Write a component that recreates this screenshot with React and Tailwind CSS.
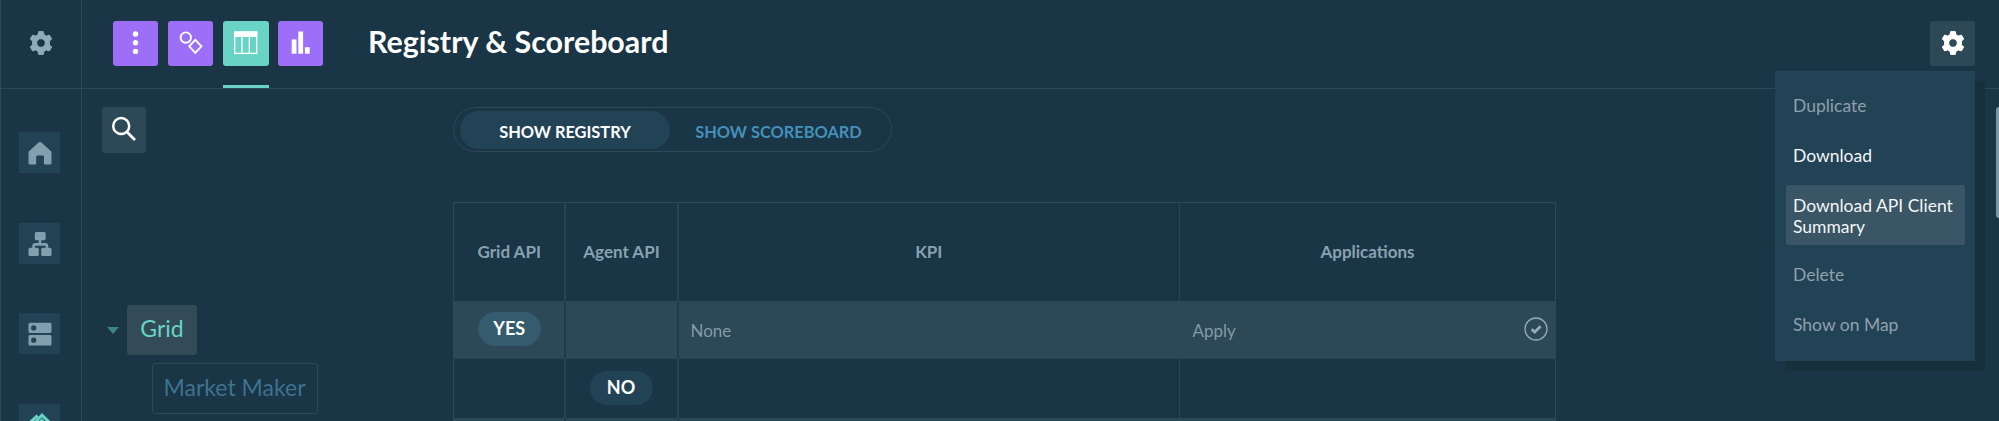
function Gear({ className }) {
  return (
    <svg viewBox="0 0 24 24" className={className} fill="currentColor">
      <path
        fillRule="evenodd"
        stroke="currentColor"
        strokeWidth="1"
        strokeLinejoin="round"
        d="M9.700 .6h4.600l.6 3.100a8.800 8.800 0 0 1 2.500 1.400l3-1 2.300 4-2.400 2.100a8.800 8.800 0 0 1 0 3.600l2.400 2.100-2.300 4-3-1a8.800 8.800 0 0 1-2.500 1.400l-.6 3.100H9.700l-.6-3.100a8.800 8.800 0 0 1-2.500-1.400l-3 1-2.300-4 2.400-2.100a8.800 8.800 0 0 1 0-3.600L1.300 8.100l2.300-4 3 1a8.800 8.800 0 0 1 2.500-1.400zM12 7.700a4.300 4.300 0 1 0 0 8.600a4.300 4.300 0 0 0 0-8.600z"
      />
    </svg>
  );
}

function HomeIcon() {
  return (
    <svg viewBox="0 0 24 24" className="h-6 w-6" fill="currentColor">
      <path d="M11.200 1q.8-.7 1.600 0L23 10.200q.5.5.5 1.200V22.400q0 1.100-1.100 1.100H17q-1.100 0-1.100-1.100V15.600q0-1-1-1H9.200q-1 0-1 1V22.400q0 1.100-1.100 1.100H1.600q-1.100 0-1.100-1.100V11.400q0-.7.5-1.200z" />
    </svg>
  );
}

function TreeIcon() {
  return (
    <svg viewBox="0 0 24 24" className="h-6 w-6" fill="currentColor">
      <rect x="6.800" y="0" width="10.800" height="8.200" rx="1.500" />
      <rect x=".5" y="15.800" width="10.300" height="8.200" rx="1.500" />
      <rect x="13.200" y="15.800" width="10.300" height="8.200" rx="1.500" />
      <path d="M12 7v5.400M5.500 17v-2.600q0-2 2-2h9.500q2 0 2 2V17" fill="none" stroke="currentColor" strokeWidth="2.600" />
    </svg>
  );
}

function ServerIcon() {
  return (
    <svg viewBox="0 0 24 24" className="h-6 w-6" fill="currentColor">
      <path fillRule="evenodd" d="M2 .7H22q1.500 0 1.500 1.500V9.600q0 1.500-1.500 1.500H2q-1.500 0-1.500-1.500V2.200Q.5.700 2 .7zM5.700 3.300a2.600 2.600 0 1 0 0 5.200a2.600 2.600 0 0 0 0-5.200z" />
      <path fillRule="evenodd" d="M2 13H22q1.500 0 1.500 1.500V21.900q0 1.500-1.500 1.500H2q-1.500 0-1.500-1.500V14.500Q.5 13 2 13zM5.700 15.600a2.600 2.600 0 1 0 0 5.200a2.600 2.600 0 0 0 0-5.200z" />
    </svg>
  );
}

function DealIcon() {
  return (
    <svg viewBox="0 0 24 24" className="h-6 w-6" fill="none" stroke="currentColor">
      <path d="M1 10.500 9.500 2.500M5 11.500 14 2.200 24 12" strokeWidth="3" />
      <path d="M9 11 14 6.500 17 10" strokeWidth="1.600" />
    </svg>
  );
}

function DotsIcon() {
  return (
    <svg viewBox="0 0 24 24" className="h-6 w-6" fill="currentColor">
      <circle cx="11.500" cy="3" r="2.700" />
      <circle cx="11.500" cy="11.700" r="2.700" />
      <circle cx="11.500" cy="20.400" r="2.700" />
    </svg>
  );
}

function ShapesIcon() {
  return (
    <svg viewBox="0 0 24 24" className="h-6 w-6" fill="none" stroke="currentColor" strokeWidth="1.900">
      <circle cx="6.800" cy="6.600" r="5.200" />
      <path d="M16.300 8.800 22.400 15.300 16.300 21.800 10.200 15.300z" />
    </svg>
  );
}

function ColumnsIcon() {
  return (
    <svg viewBox="0 0 24 24" className="h-6 w-6" fill="none" stroke="currentColor" strokeWidth="1.300">
      <rect x=".7" y="1.100" width="22" height="21.300" />
      <rect x=".7" y="1.100" width="22" height="4.200" fill="currentColor" />
      <path d="M8 5v17.500M15.300 5v17.500" />
    </svg>
  );
}

function BarsIcon() {
  return (
    <svg viewBox="0 0 24 24" className="h-6 w-6" fill="currentColor">
      <rect x="2.700" y="8.400" width="4.800" height="14.300" />
      <rect x="9.300" y=".5" width="4.800" height="22.200" />
      <rect x="15.900" y="16.200" width="4.800" height="6.500" />
    </svg>
  );
}

function SearchIcon() {
  return (
    <svg viewBox="0 0 26 26" className="h-[26px] w-[26px]" fill="none" stroke="currentColor" strokeWidth="2.500">
      <circle cx="10.200" cy="10" r="8" />
      <path d="M15.700 15.800 24 24" strokeWidth="2.700" />
    </svg>
  );
}

function CheckIcon() {
  return (
    <svg viewBox="0 0 24 24" className="h-6 w-6" fill="none" stroke="#93abb7">
      <circle cx="12" cy="12" r="11" strokeWidth="1.300" />
      <path d="M7.700 12.200 10.700 15 16.600 9.200" strokeWidth="2.800" />
    </svg>
  );
}

function RailButton({ children, className }) {
  return (
    <div className={`flex h-[41px] w-[41px] shrink-0 items-center justify-center bg-[#224256] pl-px ${className}`}>
      {children}
    </div>
  );
}

function Tool({ children, className }) {
  return (
    <div className={`flex h-[45px] items-center justify-center rounded-[3px] pb-px text-white ${className}`}>
      {children}
    </div>
  );
}

const menu = [
  { label: "Duplicate", tone: "h-[42px] text-[#8fa0ab]" },
  { label: "Download", tone: "h-[42px] text-[#f3f6f7]" },
  { label: "Download API Client Summary", tone: "mt-px h-[60px] bg-[#3a5565] pt-px text-[#f3f6f7]" },
  { label: "Delete", tone: "h-[42px] text-[#8fa0ab]" },
  { label: "Show on Map", tone: "h-[42px] text-[#8fa0ab]" },
];

function Menu() {
  return (
    <div className="absolute top-[71px] right-[24px] z-10 flex h-[290px] w-[200px] flex-col gap-2 bg-[#224256] pt-[13px] pr-[10px] pl-[11px] shadow-[10px_10px_0_#18303c]">
      {menu.map((m) => (
        <div key={m.label} className={`flex items-center rounded-[2px] pl-[7px] text-[17.500px] leading-[21px] ${m.tone}`}>
          {m.label}
        </div>
      ))}
    </div>
  );
}

function Pill({ children, className }) {
  return (
    <div className={`flex h-[34px] w-[63px] items-center justify-center rounded-full pb-px text-[18px] font-bold text-white ${className}`}>
      {children}
    </div>
  );
}

function Table() {
  return (
    <table className="w-[1102px] table-fixed border-collapse border border-[#294a5a] text-[17px]">
      <colgroup>
        <col className="w-[111px]" />
        <col className="w-[113px]" />
        <col className="w-[502px]" />
        <col className="w-[376px]" />
      </colgroup>
      <thead>
        <tr className="h-[98px] font-bold text-[#87a2b0]">
          <th className="border-r-2 border-[#264657] p-0 pl-px">Grid API</th>
          <th className="border-r-2 border-[#264657] p-0 pl-px">Agent API</th>
          <th className="border-r border-[#264657] p-0">KPI</th>
          <th className="p-0">Applications</th>
        </tr>
      </thead>
      <tbody>
        <tr className="h-[58px] bg-[#2d4856] text-[#829ba8]">
          <td className="border-r-2 border-[#203b49] p-0 pl-px"><Pill className="mx-auto bg-[#355b6f]">YES</Pill></td>
          <td className="border-r-2 border-[#203b49] p-0" />
          <td className="p-0 pt-[2px] pl-[12px]">None</td>
          <td className="p-0">
            <div className="flex items-center justify-between pr-[7px] pl-[13px]">
              <span className="pt-[2px]">Apply</span>
              <CheckIcon />
            </div>
          </td>
        </tr>
        <tr className="h-[59px] border-t border-[#264657]">
          <td className="border-r-2 border-[#264657] p-0" />
          <td className="border-r-2 border-[#264657] p-0"><Pill className="mx-auto bg-[#224256]">NO</Pill></td>
          <td className="border-r border-[#264657] p-0" />
          <td className="p-0" />
        </tr>
        <tr className="h-[59px] bg-[#294858]">
          <td className="border-r-2 border-[#203b49] p-0" />
          <td className="border-r-2 border-[#203b49] p-0" />
          <td className="p-0" />
          <td className="p-0" />
        </tr>
      </tbody>
    </table>
  );
}

export default function App() {
  return (
    <div className="relative flex h-[421px] w-[1999px] overflow-hidden bg-[#193546] font-[Lato,sans-serif]">
      <aside className="flex w-[82px] shrink-0 flex-col border-x border-[#2d4957]">
        <div className="flex h-[89px] w-full shrink-0 justify-center border-b border-[#2d4957] pt-[31px] pr-px text-[#8faab8]">
          <Gear className="h-6 w-6" />
        </div>
        <div className="flex flex-col pl-[18px]">
          <RailButton className="mt-[43px] text-[#829fad]"><HomeIcon /></RailButton>
          <RailButton className="mt-[50px] text-[#829fad]"><TreeIcon /></RailButton>
          <RailButton className="mt-[49px] text-[#829fad]"><ServerIcon /></RailButton>
          <RailButton className="mt-[50px] text-[#69d4c5]"><DealIcon /></RailButton>
        </div>
      </aside>
      <div className="flex flex-1 flex-col">
        <header className="flex h-[89px] shrink-0 items-start border-b border-[#2d4957] pt-[21px] pr-[24px] pl-[31px]">
          <Tool className="w-[45px] bg-[#9d6ef8]"><DotsIcon /></Tool>
          <Tool className="ml-[10px] w-[45px] bg-[#9d6ef8]"><ShapesIcon /></Tool>
          <div className="ml-[10px] flex h-[67px] flex-col justify-between">
            <Tool className="w-[46px] bg-[#69d4c5]"><ColumnsIcon /></Tool>
            <div className="h-[3px] bg-[#69d4c5]" />
          </div>
          <Tool className="ml-[9px] w-[45px] bg-[#9d6ef8]"><BarsIcon /></Tool>
          <h1 className="-mt-px ml-[45px] text-[30.400px] leading-[43px] font-bold text-white">Registry &amp; Scoreboard</h1>
          <Tool className="ml-auto w-[45px] bg-[#2d4856]"><Gear className="h-6 w-6" /></Tool>
        </header>
        <main className="flex flex-1 items-start pt-[18px]">
          <div className="flex w-[371px] shrink-0 flex-col items-start pl-5">
            <div className="flex h-[46px] w-[44px] items-center justify-center rounded-[3px] bg-[#2d4856] pr-px pb-[3px] text-white">
              <SearchIcon />
            </div>
            <div className="mt-[152px] flex items-center pl-[5px]">
              <svg viewBox="0 0 12 7" className="h-[7px] w-3"><path d="M0 0h12L6 7z" fill="#3f8583" /></svg>
              <div className="ml-2 flex h-[50px] w-[70px] items-center justify-center rounded-[3px] bg-[#334a57] pb-[3px] text-[23px] text-[#69d4c5]">Grid</div>
            </div>
            <div className="mt-[8px] ml-[50px] flex h-[51px] w-[166px] items-center justify-center rounded-[3px] border border-[#2d4957] pr-px pb-[3px] text-[23px] whitespace-nowrap text-[#3f728e]">Market Maker</div>
          </div>
          <div className="flex flex-col items-start">
            <div className="flex h-[45px] w-[439px] items-center rounded-full border border-[#2d4957] pl-[6px] text-[16.400px] font-bold">
              <div className="flex h-[38px] w-[210px] items-center justify-center rounded-full bg-[#224256] pt-[5px] text-white">SHOW REGISTRY</div>
              <div className="flex-1 pt-[5px] pr-[4px] text-center text-[#4590b8]">SHOW SCOREBOARD</div>
            </div>
            <div className="mt-[50px] h-[219px] overflow-hidden"><Table /></div>
          </div>
        </main>
      </div>
      <div className="absolute top-[107px] right-0 h-[111px] w-[3px] rounded-l-[3px] bg-[#7896a4]" />
      <Menu />
    </div>
  );
}
